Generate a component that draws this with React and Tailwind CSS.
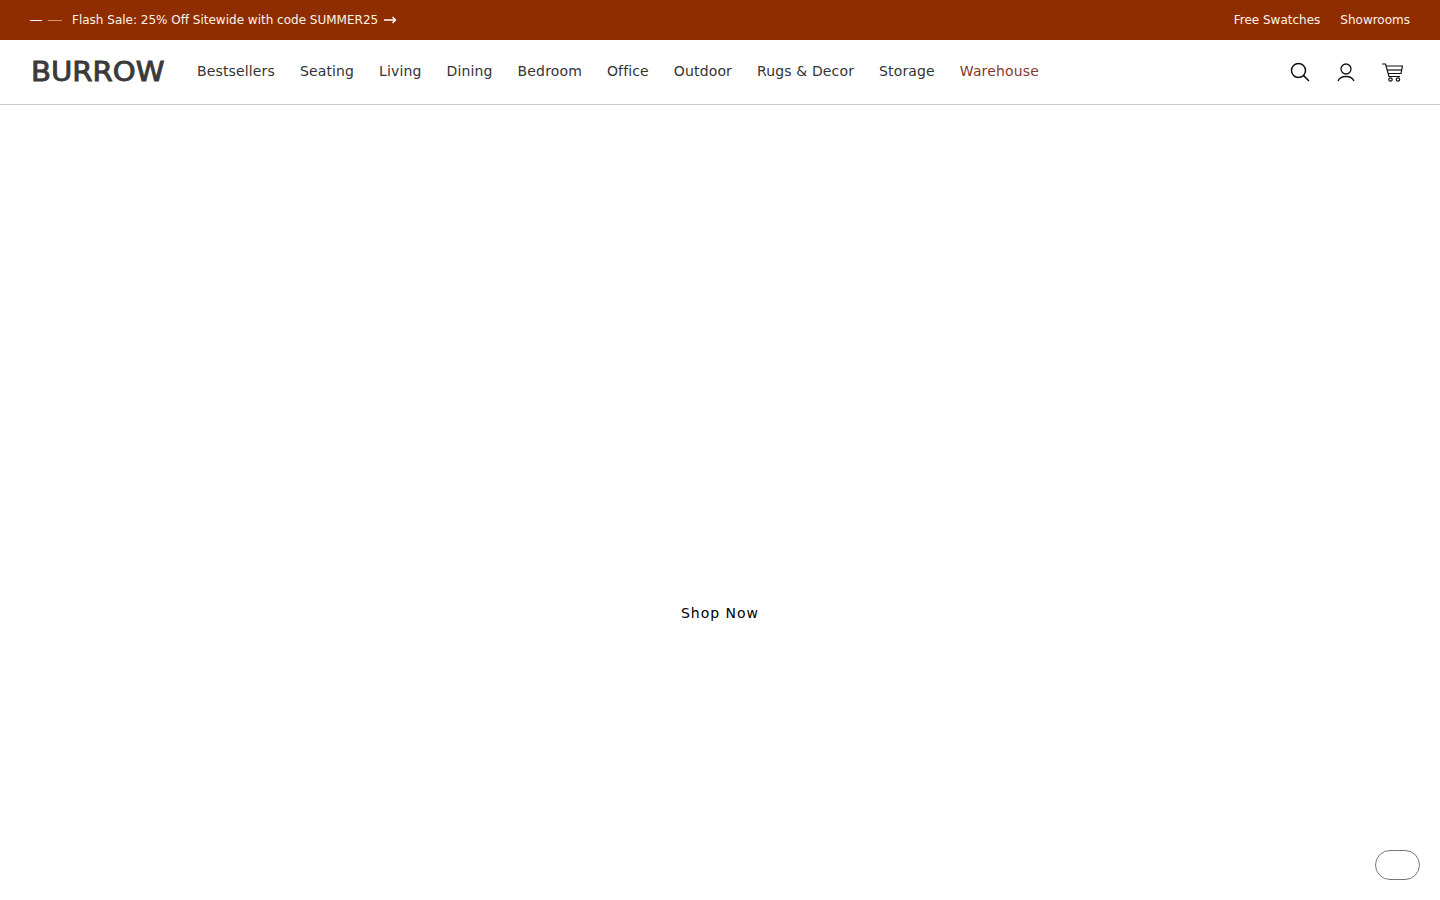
export default function App() {
  const nav = ["Bestsellers", "Seating", "Living", "Dining", "Bedroom", "Office", "Outdoor", "Rugs & Decor", "Storage"];
  return (
    <div className="relative h-[900px] overflow-hidden bg-white font-['DejaVu_Sans',sans-serif]">
      <div className="flex h-10 items-center justify-between bg-[#8f2d00] pl-[30px] pr-[30px] text-xs text-[#fdf3e7]">
        <div className="flex items-center">
          <div className="flex items-center gap-[6px]">
            <span className="h-px w-3 bg-white" />
            <span className="h-px w-[14px] bg-[#d9946f]" />
          </div>
          <span className="ml-[10px]">Flash Sale: 25% Off Sitewide with code SUMMER25</span>
          <svg className="ml-[6px]" width="12" height="10" viewBox="0 0 12 10" fill="none" stroke="white" strokeWidth="1.3">
            <path d="M0 5H11.5M8.5 2L11.5 5L8.5 8" />
          </svg>
        </div>
        <div className="flex items-center gap-5">
          <span>Free Swatches</span>
          <span>Showrooms</span>
        </div>
      </div>
      <header className="flex h-[65px] items-center justify-between border-b border-[#cccccc] pl-[31px] pr-[37px]">
        <div className="flex items-center">
          <span className="w-[134px] origin-left scale-x-[1.12] text-[26px] leading-none tracking-[0px] text-[#3a3a3a] [-webkit-text-stroke:0.9px_#3a3a3a]">BURROW</span>
          <nav className="relative -top-px ml-8 flex items-center gap-[25px] text-sm tracking-[0.14px] text-[#333333]">
            {nav.map((n) => (<span key={n}>{n}</span>))}
            <span className="text-[#84392a]">Warehouse</span>
          </nav>
        </div>
        <div className="flex items-center">
          <svg width="20" height="20" viewBox="0 0 20 20" fill="none" stroke="#111" strokeWidth="1.5">
            <circle cx="8.5" cy="8.5" r="7" />
            <path d="M13.6 13.6L19 19" />
          </svg>
          <svg className="ml-[27px]" width="18" height="19" viewBox="0 0 18 19" fill="none" stroke="#111" strokeWidth="1.3">
            <circle cx="9" cy="6" r="5" />
            <path d="M1 18C2.5 14.5 5.5 13.5 9 13.5C12.5 13.5 15.5 14.5 17 18" />
          </svg>
          <svg className="ml-[27px]" width="21" height="19" viewBox="0 0 21 19" fill="none" stroke="#111" strokeWidth="1.2">
            <path d="M0 1H3.5L7 13.5H18" />
            <path d="M4 3H20.5L19 10.5H6" />
            <path d="M5 7H20" />
            <circle cx="8.5" cy="16.5" r="1.7" />
            <circle cx="16" cy="16.5" r="1.7" />
          </svg>
        </div>
      </header>
      <main className="flex justify-center pt-[499px]">
        <span className="text-sm leading-[18px] tracking-[1px] text-black">Shop Now</span>
      </main>
      <div className="fixed bottom-5 right-5 h-[30px] w-[45px] rounded-[15px] border border-[#777777] bg-white" />
    </div>
  );
}
